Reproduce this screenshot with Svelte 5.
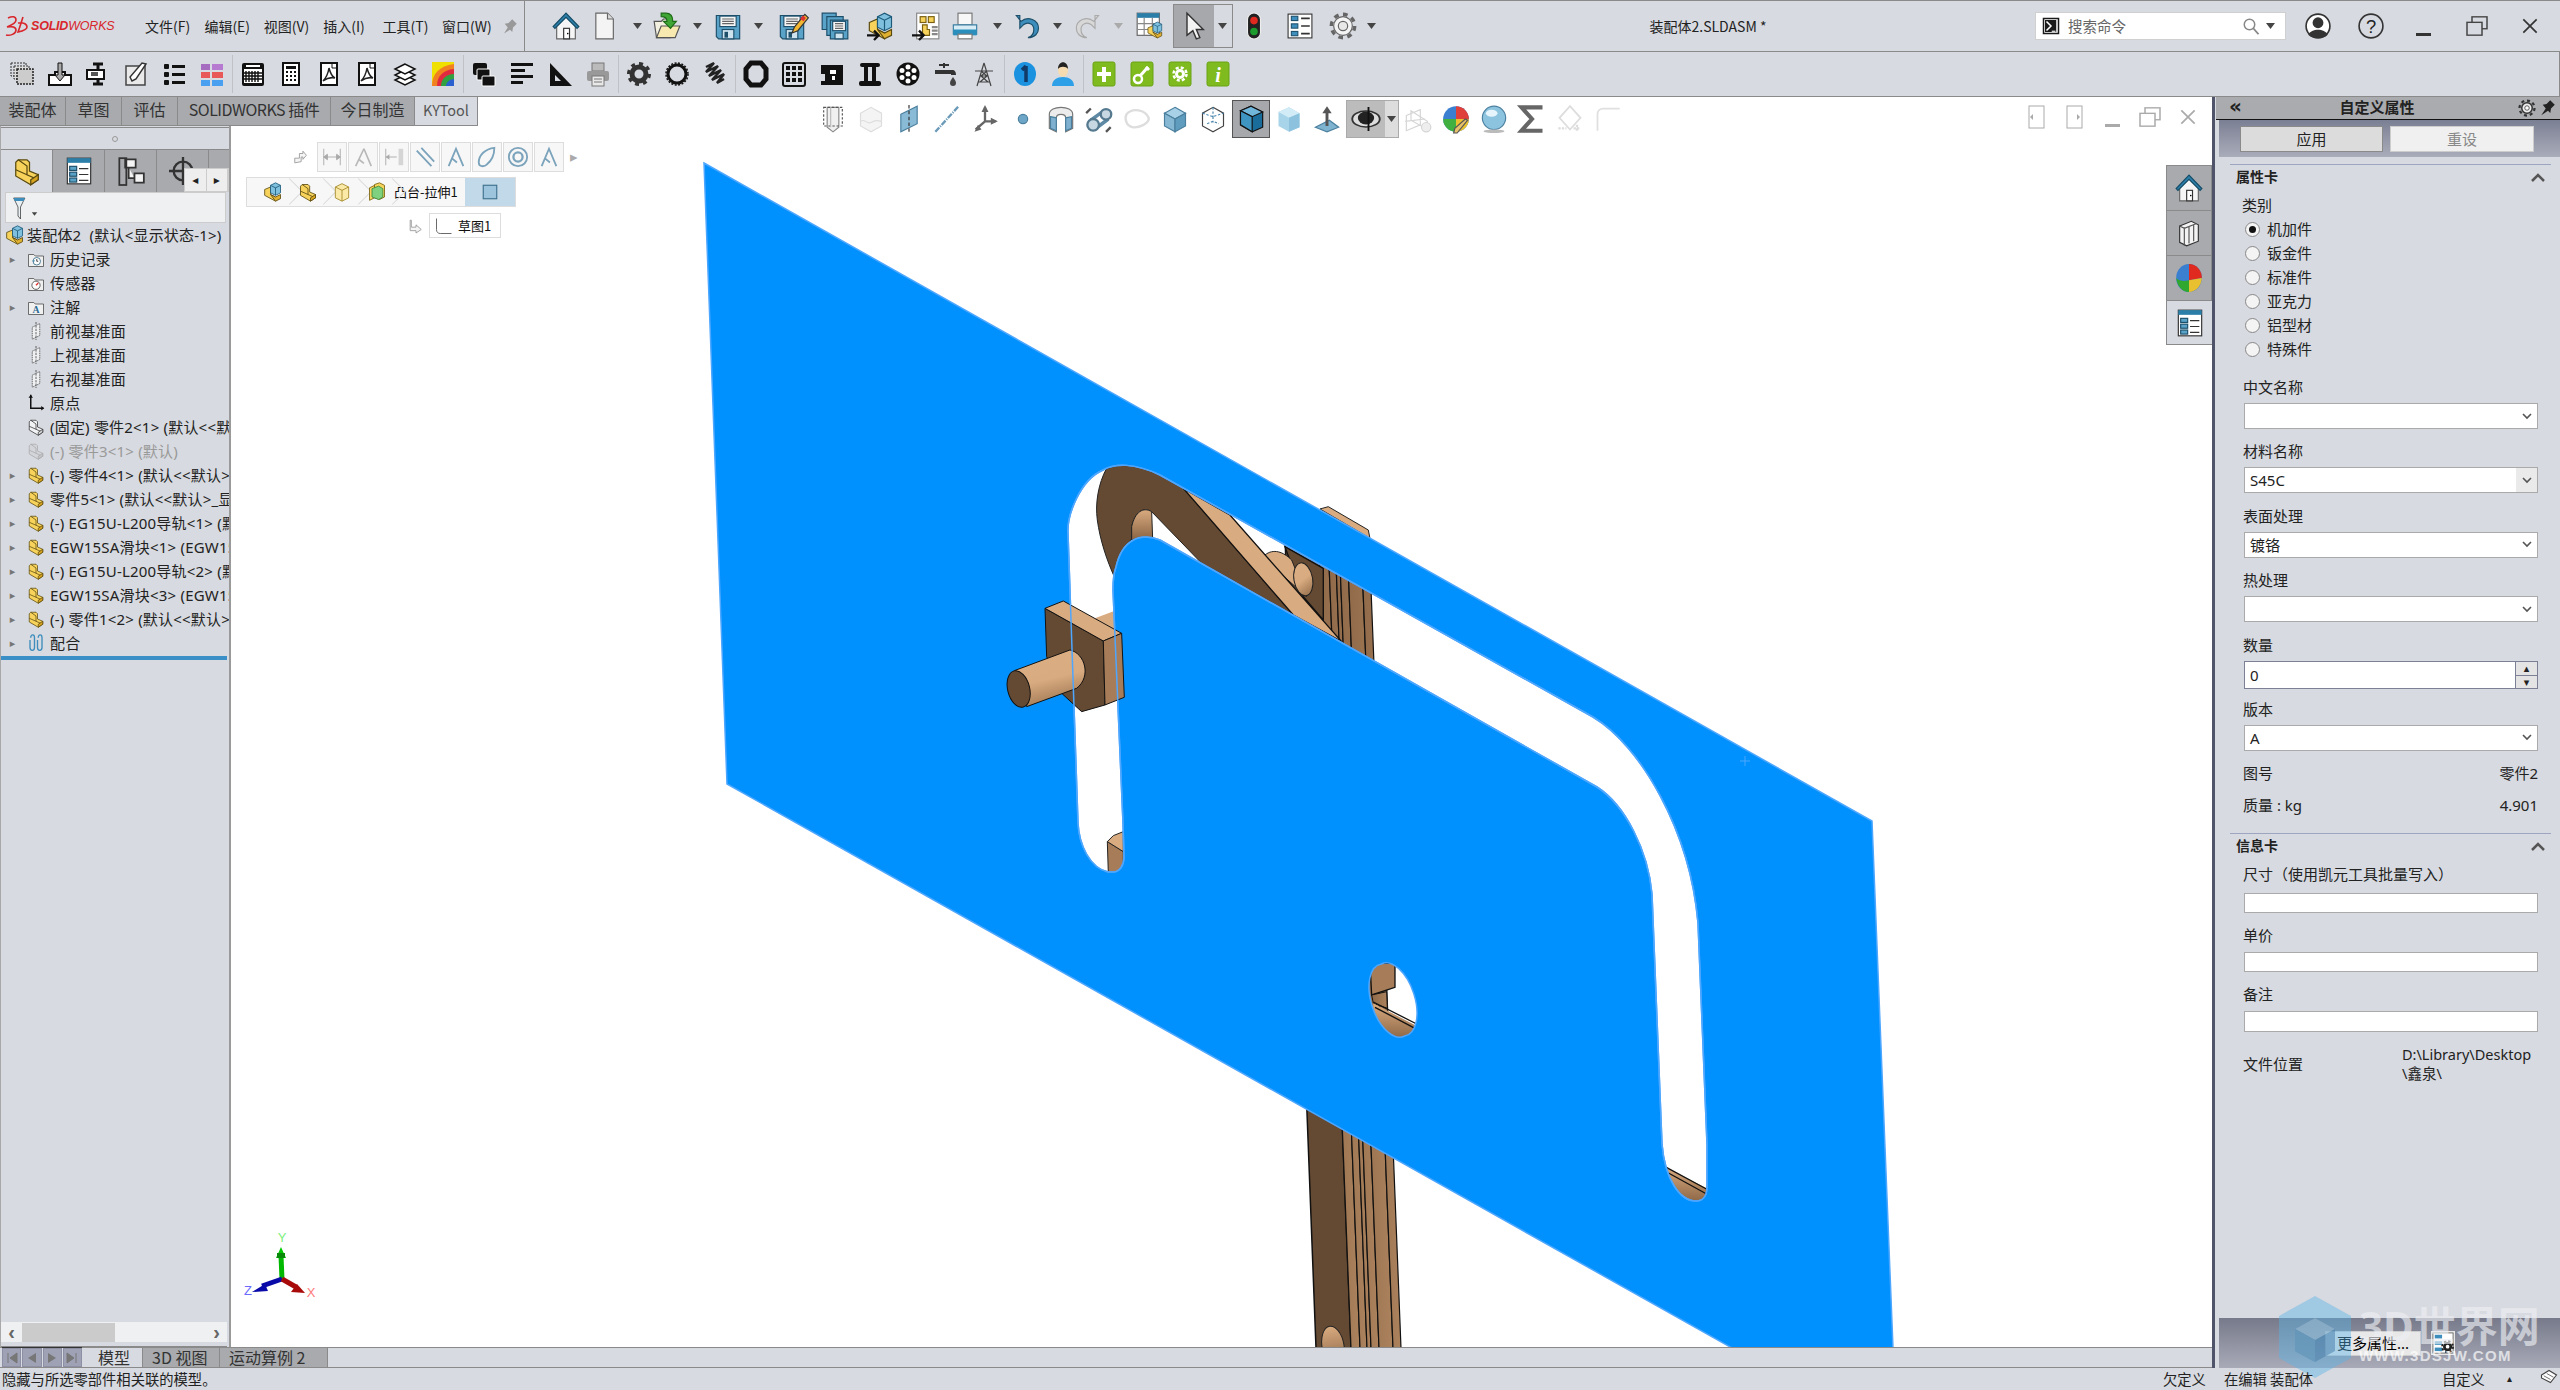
<script>
  const doc = (f = '#f4f4f4', s = '#666') => `<path d="M5 1h10l5 5v17H5z" fill="${f}" stroke="${s}"/><path d="M15 1v5h5" fill="#ddd" stroke="${s}"/>`;
  const floppy = `<path d="M2 3h20v20H4l-2-2z" fill="#5aa3c8" stroke="#1d4f6b"/><rect x="5" y="3.500" width="14" height="9" fill="#f5f5f5" stroke="#1d4f6b"/><path d="M7 6h10M7 8h10M7 10h10" stroke="#666"/><rect x="7" y="15" width="10" height="8" fill="#cfe3ee" stroke="#1d4f6b"/><rect x="9" y="17" width="3" height="5" fill="#1d4f6b"/>`;
  const cube = (a = '#a8d0e6', b = '#5f9cbd', c = '#7fb4d1', s = '#355f78') => `<path d="M12 2 21 7 12 12 3 7z" fill="${a}" stroke="${s}"/><path d="M3 7v11l9 5V12z" fill="${c}" stroke="${s}"/><path d="M21 7v11l-9 5V12z" fill="${b}" stroke="${s}"/>`;
  const lpart = (f = '#f7d35c', d = '#d9a520', s = '#5a4a10') => `<path d="M5 3h7l2 2v7l7 3v4l-6 4-12-7V5z" fill="${f}" stroke="${s}"/><path d="M5 3 12 8v7l9 4M12 15l-9-4" fill="none" stroke="${s}"/><path d="M15 23v-4l6-4v4z" fill="${d}" stroke="${s}"/>`;
  const asm = `<path d="M2 9 9 6v9l6 3v5L2 16z" fill="#f7d35c" stroke="#5a4a10"/><path d="M9 15l6 3 6-3v5l-6 3z" fill="#e0b030" stroke="#5a4a10"/><path d="M9 4l6-3 6 3v9l-6 3-6-3z" fill="#7fc0de" stroke="#1d5a7a"/><path d="M9 4l6 3 6-3M15 7v9" fill="none" stroke="#1d5a7a"/>`;
  const blackDoc = (inner) => `<path d="M4 1h16v22H4z" fill="#fff" stroke="#111" stroke-width="2"/>${inner}`;
  const pdf = blackDoc(`<path d="M15 1v5h5" fill="none" stroke="#111"/><path d="M12 6c-1 6-3 10-6 13 4-3 8-4 12-3-4-2-5-6-6-10z" fill="none" stroke="#222" stroke-width="1.500"/>`);
  const green = (x) => `<rect x="1" y="0" width="22" height="24" rx="2" fill="#7fba1f" stroke="#6aa316"/>${x}`;
  const restoreIcon = (c, f) => `<rect x="7" y="2" width="15" height="13" fill="none" stroke="${c}" stroke-width="1.500"/><rect x="2" y="8" width="15" height="14" fill="${f}" stroke="${c}" stroke-width="1.500"/>`;
  const I = {
    home: `<path d="M4 12v11h16V12L12 4z" fill="#f5f5f5" stroke="#666"/><path d="M12 1 1 12.500l1.500 1.500L12 4.500l9.500 9.500 1.500-1.500z" fill="#2b7ea8" stroke="#134b66"/><rect x="10" y="14" width="5" height="9" fill="#fff" stroke="#333"/><circle cx="13.500" cy="18.500" r=".7"/>`,
    doc: doc(),
    open: `<path d="M3 22 1 8h6l2-2h6v16z" fill="#f3f0e0" stroke="#555"/><path d="M3 22l4-10h16l-4 10z" fill="#f7e9b0" stroke="#555"/><path d="M7 1h4c4 0 6 3 6 7h3l-5 6-6-6h3c0-3-2-4-5-4z" fill="#3fa535" stroke="#1d6a16"/>`,
    save: floppy,
    saveas: floppy + `<path d="M23 2l-9 11-2 5 5-2 9-11z" fill="#f2b632" stroke="#333"/><path d="M22 8l2-3-3-2-2 3z" fill="#d33"/>`,
    saveall: `<path d="M1 1h12v14H1z" fill="#5aa3c8" stroke="#1d4f6b"/><path d="M5 4h14v16H5z" fill="#5aa3c8" stroke="#1d4f6b"/><path d="M8 7h15v16H8z" fill="#5aa3c8" stroke="#1d4f6b"/><rect x="10" y="8" width="11" height="8" fill="#f5f5f5" stroke="#1d4f6b"/><path d="M12 10h7M12 12h7M12 14h7" stroke="#666"/><rect x="12" y="18" width="7" height="5" fill="#cfe3ee" stroke="#1d4f6b"/>`,
    asmgo: asm + `<path d="M0 20h9M6 16l4 4-4 4" fill="none" stroke="#111" stroke-width="2"/>`,
    drawgo: `<rect x="4" y="1" width="19" height="22" fill="#fff" stroke="#888"/><rect x="7" y="4" width="5" height="5" fill="#f7d35c" stroke="#7a6010"/><rect x="14" y="4" width="5" height="5" fill="#f7d35c" stroke="#7a6010"/><path d="M9 11h4v4h2v5H9z" fill="#f7d35c" stroke="#7a6010"/><path d="M17 13h5M17 16h5M17 19h5" stroke="#888" stroke-width="2"/><path d="M0 20h9M6 16l4 4-4 4" fill="none" stroke="#111" stroke-width="2"/>`,
    print: `<rect x="6" y="1" width="12" height="10" fill="#f7f7f7" stroke="#777"/><path d="M2 11h20v8H2z" fill="#d8ecf5" stroke="#3a7fa3"/><rect x="2" y="15" width="20" height="5" fill="#2b8fbe"/><rect x="6" y="19" width="12" height="4" fill="#fff" stroke="#777"/>`,
    undo: `<path d="M6 3v11l3-3c4-3 9-1 9 4 0 3-2 6-5 7 6 0 9-4 9-8 0-7-9-11-15-6L3 3z" transform="translate(-1 0)" fill="#3d8ebc" stroke="#1d4f6b"/>`,
    redo: `<g transform="matrix(-1 0 0 1 24 0)"><path d="M6 3v11l3-3c4-3 9-1 9 4 0 3-2 6-5 7 6 0 9-4 9-8 0-7-9-11-15-6L3 3z" fill="#d8d8d8" stroke="#aaa"/></g>`,
    table: `<rect x="1" y="1" width="19" height="19" fill="#fff" stroke="#666"/><rect x="1" y="1" width="19" height="4" fill="#2b7ea8"/><path d="M1 10h19M1 15h19M7 5v15M14 5v15" stroke="#888"/><g transform="translate(9 8) scale(.62)">${asm}</g>`,
    cursor: `<path d="M6 1v19l5-4 3 7 3-1-3-7h6z" fill="#f3f3f3" stroke="#333" stroke-width="1.200"/>`,
    traffic: `<rect x="6" y="0" width="12" height="24" rx="6" fill="#222" stroke="#eee"/><circle cx="12" cy="7" r="3.500" fill="#e02a20"/><circle cx="12" cy="17" r="3.500" fill="#1c9c2c"/>`,
    list: `<rect x="1" y="1" width="22" height="22" fill="#fff" stroke="#333"/><path d="M13 5h8M13 12h8M13 19h8" stroke="#333" stroke-width="1.500"/><rect x="4" y="3" width="6" height="4" fill="#3d8ebc" stroke="#1d4f6b"/><rect x="4" y="10" width="6" height="4" fill="#3d8ebc" stroke="#1d4f6b"/><rect x="4" y="17" width="6" height="4" fill="#3d8ebc" stroke="#1d4f6b"/>`,
    gearw: `<circle cx="12" cy="12" r="8" fill="#f4f4f4" stroke="#666"/><circle cx="12" cy="12" r="10" fill="none" stroke="#666" stroke-width="3" stroke-dasharray="4 3.800"/><circle cx="12" cy="12" r="4" fill="#e8e8e8" stroke="#666"/>`,
    pin: `<path d="M9 14 4 22l8-5 3 3 1-6 5-5-6-6-5 5-5 1z" fill="#999"/>`,
    x: `<path d="M4 4l16 16M20 4 4 20" stroke="#333" stroke-width="2"/>`,
    xl: `<path d="M4 4l16 16M20 4 4 20" stroke="#aaa" stroke-width="2"/>`,
    rest: restoreIcon('#444', '#d7dae0'),
    restl: restoreIcon('#aaa', '#fff'),
    d1: `<rect x="1" y="1" width="15" height="13" fill="none" stroke="#333" stroke-dasharray="2 1"/><rect x="4" y="4" width="15" height="13" fill="#ddd" stroke="#333" stroke-dasharray="2 1"/><rect x="7" y="7" width="16" height="15" fill="#ccc" stroke="#222" stroke-width="1.500" stroke-dasharray="2 1"/>`,
    d2: `<path d="M1 13h6v-3h10v3h6v10H1z" fill="#fff" stroke="#111" stroke-width="2"/><path d="M10 1h4v12h3l-5 6-5-6h3z" fill="#aaa" stroke="#111"/>`,
    d3: `<path d="M7 2h10M7 22h10M12 2v20" stroke="#111" stroke-width="3"/><rect x="1" y="8" width="17" height="9" fill="#fff" stroke="#111" stroke-width="2"/><rect x="5" y="10" width="7" height="4" fill="#555"/>`,
    d4: `<path d="M2 4h19v19H2z" fill="#e9e9e9" stroke="#444" stroke-width="1.500"/><path d="M6 15l2 4 4-2L22 2l-4-1z" fill="#fff" stroke="#333" stroke-width="1.500"/>`,
    d5: `<g fill="#111"><rect x="2" y="2" width="5" height="5" rx="1"/><rect x="10" y="3" width="13" height="3"/><rect x="2" y="10" width="5" height="5" rx="1"/><rect x="10" y="11" width="13" height="3"/><rect x="2" y="18" width="5" height="5" rx="1"/><rect x="10" y="19" width="13" height="3"/></g>`,
    d6: `<rect x="1" y="2" width="9" height="6" fill="#a66cc0"/><rect x="12" y="2" width="11" height="6" fill="#b67ad0"/><rect x="1" y="10" width="9" height="6" fill="#e85858"/><rect x="12" y="10" width="11" height="6" fill="#e85858"/><rect x="1" y="18" width="9" height="6" fill="#4aa0f0"/><rect x="12" y="18" width="11" height="6" fill="#4aa0f0"/>`,
    d7: `<rect x="1" y="1" width="22" height="23" rx="2" fill="#111"/><rect x="3" y="7" width="18" height="14" fill="#fff"/><path d="M5 9v11M8 9v11M11 9v11M14 9v11M17 9v11M3 11h18M3 14h18M3 17h18" stroke="#111" stroke-width="1.400"/><rect x="5" y="3" width="14" height="2" fill="#fff"/>`,
    d8: blackDoc(`<rect x="7" y="4" width="10" height="3" fill="#111"/><path d="M7 10h2M11 10h2M15 10h2M7 14h2M11 14h2M15 14h2M7 18h2M11 18h2M15 18h2" stroke="#111" stroke-width="2"/>`),
    pdf,
    d11: `<g fill="#fff" stroke="#111" stroke-width="1.500"><path d="M12 13 2 18l10 5 10-5z"/><path d="M12 8 2 13l10 5 10-5z"/><path d="M12 2 2 7l10 5 10-5z"/></g>`,
    d12: `<rect x="1" y="0" width="22" height="24" fill="#f0e000"/><path d="M1 24C1 12 8 4 23 2v22z" fill="#f08020"/><path d="M6 24C6 14 12 8 23 7v17z" fill="#e02a40"/><path d="M10 24c0-7 5-12 13-12v12z" fill="#30a040"/><path d="M15 24c0-3 3-7 8-7v7z" fill="#2a60d0"/>`,
    d13: `<rect x="1" y="1" width="14" height="12" rx="2" fill="#111"/><rect x="5" y="7" width="13" height="11" rx="1" fill="#111" stroke="#fff"/><rect x="10" y="14" width="13" height="10" rx="1" fill="#111" stroke="#fff"/>`,
    d14: `<g fill="#111"><rect x="1" y="1" width="22" height="3"/><rect x="1" y="7" width="14" height="3"/><rect x="1" y="13" width="22" height="3"/><rect x="1" y="19" width="12" height="3"/></g>`,
    d15: `<path d="M2 1v23h22z" fill="#111"/><path d="M7 13v6h6z" fill="#d7dae0"/>`,
    d16: `<rect x="6" y="1" width="12" height="8" fill="#bbb" stroke="#777"/><rect x="1" y="9" width="22" height="10" rx="2" fill="#999"/><rect x="6" y="14" width="12" height="10" fill="#e8e8e8" stroke="#777"/><path d="M8 17h8M8 20h8" stroke="#777"/>`,
    d17: `<circle cx="12" cy="12" r="7" fill="none" stroke="#333" stroke-width="5"/><circle cx="12" cy="12" r="10.500" fill="none" stroke="#333" stroke-width="3" stroke-dasharray="4 4.200"/>`,
    d18: `<circle cx="12" cy="12" r="9" fill="none" stroke="#111" stroke-width="3"/><circle cx="12" cy="12" r="11" fill="none" stroke="#111" stroke-width="1.500" stroke-dasharray="2 1.500"/>`,
    d19: `<path d="M3 5 11 1 3 10l12-6-9 10 12-6-9 10 12-6-7 9 7-4" fill="none" stroke="#222" stroke-width="2.500"/>`,
    d20: `<path d="M7 1h10l5 6v10l-5 6H7l-5-6V7z" fill="none" stroke="#111" stroke-width="5"/>`,
    d21: `<rect x="1" y="1" width="22" height="23" rx="2" fill="none" stroke="#111" stroke-width="2"/><g fill="#111"><rect x="4" y="4" width="4" height="4"/><rect x="10" y="4" width="4" height="4"/><rect x="16" y="4" width="4" height="4"/><rect x="4" y="10" width="4" height="4"/><rect x="10" y="10" width="4" height="4"/><rect x="16" y="10" width="4" height="4"/><rect x="4" y="16" width="4" height="4"/><rect x="10" y="16" width="4" height="4"/><rect x="16" y="16" width="4" height="4"/></g>`,
    d22: `<path d="M1 3h22v20H1v-4h4v-7H1z" fill="#111"/><rect x="10" y="8" width="6" height="4" fill="#fff"/><rect x="12" y="14" width="3" height="4" fill="#fff"/>`,
    d23: `<rect x="2" y="1" width="20" height="4" rx="2" fill="#111"/><rect x="6" y="5" width="4" height="14" fill="#111"/><rect x="14" y="5" width="4" height="14" fill="#111"/><rect x="1" y="19" width="22" height="5" rx="2" fill="#111"/>`,
    d24: `<circle cx="12" cy="12" r="11.500" fill="#111"/><g fill="#fff"><circle cx="12" cy="12" r="2.500"/><circle cx="12" cy="5" r="2.500"/><circle cx="12" cy="19" r="2.500"/><circle cx="6" cy="8.500" r="2.500"/><circle cx="18" cy="8.500" r="2.500"/><circle cx="6" cy="15.500" r="2.500"/><circle cx="18" cy="15.500" r="2.500"/></g>`,
    d25: `<path d="M10 1v5M5 3h10" stroke="#333" stroke-width="2"/><path d="M1 8h17c3 0 4 2 4 5H17v-1H1z" fill="#333"/><path d="M19 15c-2 3-3 4-3 6a3 3 0 0 0 6 0c0-2-1-3-3-6z" fill="#444"/>`,
    d26: `<path d="M12 1 5 24M12 1l7 23M8 14h8M6 20h12M3 9h18M9 9l6 5-7 6M15 9l-6 5 7 6" fill="none" stroke="#444" stroke-width="1.200"/>`,
    one: `<ellipse cx="12" cy="12" rx="11" ry="12" fill="#1a92e0"/><path d="M13 4v16M9 8l4-4" stroke="#123a66" stroke-width="3.500" fill="none"/>`,
    user: `<path d="M1 24c0-6 5-9 11-9s11 3 11 9z" fill="#2da0e8"/><ellipse cx="12" cy="8" rx="5" ry="7" fill="#f6dcb0"/><path d="M7 7c0-9 10-9 10 0-2-3-8-3-10 0z" fill="#222"/>`,
    gplus: green(`<path d="M10 5h4v5h5v4h-5v6h-4v-6H5v-4h5z" fill="#fff"/>`),
    gkey: green(`<circle cx="8" cy="17" r="4" fill="none" stroke="#fff" stroke-width="2.500"/><path d="M10 14 18 5" stroke="#fff" stroke-width="3"/><path d="M16 5l3 3" stroke="#fff" stroke-width="3"/>`),
    ggear: green(`<circle cx="12" cy="12" r="3.500" fill="none" stroke="#fff" stroke-width="3"/><circle cx="12" cy="12" r="6.500" fill="none" stroke="#fff" stroke-width="2.500" stroke-dasharray="3 2.100"/>`),
    ginfo: green(`<text x="12" y="20" text-anchor="middle" font-family="Liberation Serif" font-style="italic" font-weight="700" font-size="20" fill="#fff">i</text>`),
    h1: `<path d="M7 2h10v17l-5 4-5-4z" fill="#f0f0f0" stroke="#888"/><rect x="4" y="2" width="16" height="16" fill="none" stroke="#555" stroke-dasharray="2 1.500"/><path d="M10 2v17" stroke="#bbb"/>`,
    h2: `<path d="M3 7l9-5 9 5v11l-9 5-9-5z" fill="#f4f4f4" stroke="#ddd"/><path d="M3 14c4-3 5 3 9 1s5-2 9-1" fill="none" stroke="#ddd"/>`,
    h3: `<path d="M5 8l14-7v15L5 23z" fill="#8abbd6" stroke="#4a7f9e"/><path d="M12 0v24" stroke="#333" stroke-dasharray="3 2"/>`,
    h4: `<path d="M2 23 22 1" stroke="#6a9ab8" stroke-width="2" stroke-dasharray="5 1 1 1"/>`,
    h5: `<path d="M12 14V2M12 14l9 0M12 14l-8 7" stroke="#666" stroke-width="2"/><path d="M12 0l-3 6h6zM23 14l-6-3v6zM3 23l6-2-3-4z" fill="#666"/>`,
    h6: `<circle cx="12" cy="12" r="4" fill="#6ea6c8" stroke="#4a7f9e"/>`,
    h7: `<path d="M2 8c0-8 20-8 20 0v12l-6 3V11c0-4-8-4-8 0v12l-6-3z" fill="#ececec" stroke="#777"/><path d="M3 10l5 1v11l-5-2zM16 11l5-1v10l-5 2z" fill="#7fb0cf" stroke="#4a7f9e"/>`,
    h8: `<path d="M5 13 16 5M8 21 20 12" stroke="#5f8aa6" stroke-width="3"/><circle cx="7" cy="17" r="5" fill="#c8d8e2" stroke="#55798f" stroke-width="2"/><circle cx="18" cy="8" r="4.500" fill="#c8d8e2" stroke="#55798f" stroke-width="2"/><path d="M1 7l4-4M22 19l-4 4" stroke="#555" stroke-width="2"/>`,
    h9: `<path d="M3 8c5-6 16-4 19 3 1 5-9 9-14 8S1 12 3 8z" fill="#fff" stroke="#ddd" stroke-width="2"/>`,
    h10: cube('#a8d0e6', '#5f9cbd', '#86b8d4', '#4a7f9e'),
    h11: `<path d="M12 2 21 7v11l-9 5-9-5V7z" fill="#fff" stroke="#444"/><path d="M12 2v8M3 7l9 3 9-3M12 10v5M7 16l5-2 5 2" fill="none" stroke="#4a86ad" stroke-dasharray="2 1.500"/>`,
    h12: `<path d="M12 1 22 6v13l-9 4-10-6V5z" fill="#1a6d9a" stroke="#111"/><path d="M3 5 12 1l10 5-9 4z" fill="#70b6da" stroke="#111"/><path d="M3 5l10 5v13L3 17z" fill="#3f95c2" stroke="#111"/>`,
    h13: `<path d="M12 2 21 7v12l-9 4-9-5V6z" fill="#a8d4ea"/><path d="M12 2 21 7l-9 4-9-5z" fill="#d2ecf7"/><path d="M12 11l9-4v12l-9 4z" fill="#8cc2de"/>`,
    h14: `<path d="M2 19 14 13l8 6-10 4z" fill="#7fb4d1" stroke="#4a7f9e"/><path d="M12 18V5" stroke="#555" stroke-width="2.500"/><path d="M12 1 8 7h8z" fill="#555"/>`,
    eye: `<ellipse cx="12" cy="12" rx="11" ry="8" fill="#ddd" stroke="#333" stroke-width="1.500"/><circle cx="12" cy="11" r="6.500" fill="#222"/><path d="M14 0v24" stroke="#111" stroke-width="1.500"/>`,
    h16: `<g fill="none" stroke="#d5d5d5"><path d="M2 9l12-5v13L2 22zM6 5l14 9v7L6 13zM1 14l17-2"/><circle cx="19" cy="19" r="4" fill="#eee"/></g>`,
    ball: `<circle cx="12" cy="12" r="11" fill="#3a7fd0"/><path d="M12 1a11 11 0 0 1 11 11H12z" fill="#e0403a"/><path d="M1 12a11 11 0 0 0 11 11V12z" fill="#40b040"/><path d="M23 12a11 11 0 0 1-11 11V12z" fill="#e8c030"/><path d="M22 13 13 24l-3 0 1-4 9-8z" fill="#e8c26a" stroke="#555"/>`,
    sphere: `<circle cx="12" cy="11" r="10" fill="#8cc4e0" stroke="#4a7f9e"/><ellipse cx="10" cy="7" rx="5" ry="3" fill="#e6f4fb"/><ellipse cx="12" cy="22.500" rx="9" ry="1.500" fill="#bbb"/>`,
    sigma: `<path d="M21 2H3l9 10-9 10h18" fill="none" stroke="#666" stroke-width="3.500"/>`,
    h20: `<path d="M12 1l9 10-9 10-9-10z" fill="#fff" stroke="#ddd" stroke-width="1.500"/><path d="M2 20h7M18 17v6M15 20h6" stroke="#ddd" stroke-width="2" stroke-dasharray="2 1"/>`,
    h21: `<path d="M3 22V8c0-3 2-5 5-5h14" fill="none" stroke="#e0e0e0" stroke-width="1.500"/>`,
    vpL: `<rect x="5" y="1" width="15" height="22" fill="#fff" stroke="#aaa"/><path d="M9 9l-3 3 3 3z" fill="#aaa"/>`,
    vpR: `<rect x="5" y="1" width="15" height="22" fill="#fff" stroke="#aaa"/><path d="M15 9l3 3-3 3z" fill="#aaa"/>`,
    books: `<path d="M4 6l10-4 6 3v14l-10 4-6-3z" fill="#f3f3f3" stroke="#333"/><path d="M8 7v16M12 6v15M16 5v14M4 6l4 2 10-4" fill="none" stroke="#555"/>`,
    egg: `<ellipse cx="12" cy="12" rx="11" ry="12" fill="#3a7fd0"/><path d="M12 0a11 12 0 0 1 11 12l-11 2z" fill="#e02a20"/><path d="M1 12c3 3 7 3 11 2v10C6 24 2 19 1 12z" fill="#30a830"/><path d="M23 12c0 6-5 12-11 12V14z" fill="#e8c030"/>`,
    fbh: `<path d="M2 6h7l2 2h11v14H2z" fill="#f0f0f0" stroke="#444"/><circle cx="13" cy="15" r="5" fill="#fff" stroke="#1d5a7a"/><path d="M13 12v3h2" fill="none" stroke="#111"/><path d="M7 14l2 2 2-2z" fill="#2b7ea8"/>`,
    fbs: `<path d="M2 6h7l2 2h11v14H2z" fill="#f0f0f0" stroke="#444"/><circle cx="12" cy="15" r="5.500" fill="#fff" stroke="#333"/><path d="M12 15l3-3" stroke="#d33" stroke-width="2"/>`,
    fba: `<path d="M2 6h7l2 2h11v14H2z" fill="#f0f0f0" stroke="#444"/><text x="12" y="20" text-anchor="middle" font-family="Liberation Serif" font-weight="700" font-size="13" fill="#2b6a95">A</text>`,
    plane: `<path d="M7 7l10-5v16l-10 5z" fill="#eef0f2" stroke="#444" stroke-dasharray="2 1"/><path d="M12 0v24" stroke="#333" stroke-dasharray="3 1.500"/>`,
    origin: `<path d="M5 1v18h17" fill="none" stroke="#111" stroke-width="2"/><path d="M2 5l3-4 3 4zM19 16l4 3-4 3z" fill="#111"/>`,
    partw: lpart('#f2f3f5', '#d4d6da', '#333'),
    partg: lpart('#d3d5da', '#c2c4c8', '#aaa'),
    party: lpart(),
    mates: `<path d="M5 5c0-5 5-5 5 0v13c0 5-6 5-6 0V8M15 5c0-5 5-5 5 0v13c0 5-6 5-6 0V8" fill="none" stroke="#3d8ebc" stroke-width="1.800"/>`,
    asm,
    psheet: `<rect x="2" y="1" width="20" height="22" fill="#fff" stroke="#333"/><rect x="2" y="1" width="20" height="4" fill="#2b7ea8"/><rect x="4" y="8" width="6" height="3.500" fill="#5aa3c8" stroke="#1d4f6b"/><rect x="4" y="13" width="6" height="3.500" fill="#5aa3c8" stroke="#1d4f6b"/><rect x="4" y="18" width="6" height="3.500" fill="#5aa3c8" stroke="#1d4f6b"/><path d="M12 10h8M12 15h8M12 20h8" stroke="#333"/>`,
    tree: `<path d="M7 2h9v7H7zM15 14h8v8h-8zM15 3v0M10 9v9h5" fill="#f4f4f4" stroke="#333" stroke-width="1.500"/><rect x="2" y="1" width="6" height="23" fill="none" stroke="#333" stroke-width="1.500"/>`,
    target: `<circle cx="12" cy="12" r="8" fill="none" stroke="#333" stroke-width="2"/><path d="M12 0v24M0 12h24" stroke="#333" stroke-width="2"/>`,
    funnel: `<path d="M1 2h18l-7 9v12l-4-3v-9z" fill="#e8f0f4" stroke="#444"/><path d="M1 2h18l-2 3H3z" fill="#3d8ebc"/>`,
    extrude: `<path d="M3 7l6-3v15l-6 3z" fill="#f7d35c" stroke="#7a6010"/><path d="M9 3l6-2 6 3v14l-6 3-6-2z" fill="#f7d35c" stroke="#7a6010"/><path d="M6 8l8-3 5 3v10l-5 3-8-3z" fill="#7fd07f" stroke="#3a8a3a"/>`,
    box: `<path d="M4 6l8-4 8 4v13l-8 4-8-4z" fill="#fbe9a8" stroke="#a08420"/><path d="M4 6l8 4 8-4M12 10v13" fill="none" stroke="#a08420"/>`,
    sq: `<rect x="3" y="3" width="18" height="18" fill="#9cc4dc" stroke="#3d6f8c" stroke-width="1.500"/>`,
    dim: `<path d="M3 3v18M21 3v18M3 12h18M3 12l4-3v6zM21 12l-4-3v6z" stroke="#aaa" fill="#aaa"/>`,
    ang: `<path d="M4 22 13 3M13 3l8 19M8 15l5 4" stroke="#b8b8b8" stroke-width="1.800" fill="none"/>`,
    dim2: `<path d="M3 3v18M3 12h12" stroke="#aaa"/><path d="M3 12l4-3v6z" fill="#aaa"/><rect x="17" y="3" width="5" height="18" fill="#d5d5d5"/>`,
    par: `<path d="M3 5l16 17M8 2l14 15" stroke="#7ba3bb" stroke-width="2"/>`,
    ang2: `<path d="M4 22 12 3l8 19M7 13l6 5" stroke="#7ba3bb" stroke-width="2" fill="none"/>`,
    drop: `<path d="M20 2C10 3 3 10 3 18c0 5 6 5 9 2 5-4 8-11 8-18z" fill="none" stroke="#7ba3bb" stroke-width="2"/>`,
    ring: `<circle cx="12" cy="12" r="10" fill="none" stroke="#7ba3bb" stroke-width="2"/><circle cx="12" cy="12" r="5" fill="none" stroke="#7ba3bb" stroke-width="2.500"/>`,
    trail: `<path d="M3 22v-8h8V6h6V2l6 7-6 7v-4h-3v8z" fill="#f5f5f5" stroke="#999" stroke-width="1.500"/>`,
    trail2: `<path d="M4 2v12h8v-4l9 8-9 6v-4H2V2z" fill="#f5f5f5" stroke="#999" stroke-width="1.500"/>`,
    sketch: `<path d="M2 2v15c0 3 2 5 5 5h15" fill="none" stroke="#666" stroke-width="1.300"/>`,
    mag: `<circle cx="10" cy="10" r="7" fill="none" stroke="#888" stroke-width="2"/><path d="M15 15l7 8" stroke="#888" stroke-width="2.500"/>`,
    swcmd: `<rect x="1" y="1" width="22" height="22" fill="#1a1a1a"/><rect x="3" y="3" width="18" height="18" fill="#fff"/><path d="M4 4h15v16H4z" fill="#1a1a1a"/><path d="M6 6l6 6-6 6" fill="none" stroke="#fff" stroke-width="2"/><path d="M13 19h5" stroke="#fff" stroke-width="1.500"/>`,
    avatar: `<circle cx="12" cy="12" r="11" fill="#fff" stroke="#333" stroke-width="1.500"/><circle cx="12" cy="9" r="5" fill="#333"/><path d="M3 20c3-6 15-6 18 0-4 4-14 4-18 0z" fill="#333"/>`,
    help: `<circle cx="12" cy="12" r="11" fill="none" stroke="#333" stroke-width="1.500"/><text x="12" y="18" text-anchor="middle" font-family="Liberation Sans" font-size="17" fill="#222">?</text>`,
    gearp: `<circle cx="12" cy="12" r="7" fill="#eee" stroke="#333" stroke-width="2"/><circle cx="12" cy="12" r="10" fill="none" stroke="#333" stroke-width="3" stroke-dasharray="4 3.800"/><circle cx="12" cy="12" r="3" fill="#fff" stroke="#333"/>`,
    pin2: `<path d="M9 14 3 23l9-6 3 3 1-6 5-5-6-6-5 5-5 1z" fill="#222"/>`,
    moreprop: `<rect x="1" y="1" width="22" height="22" fill="#fff" stroke="#666"/><rect x="3" y="3" width="8" height="4" fill="#3d8ebc"/><rect x="3" y="10" width="8" height="4" fill="#3d8ebc"/><rect x="3" y="17" width="8" height="4" fill="#3d8ebc"/><circle cx="17" cy="16" r="3.500" fill="none" stroke="#222" stroke-width="3"/><circle cx="17" cy="16" r="6" fill="none" stroke="#222" stroke-width="2" stroke-dasharray="2.500 2.200"/>`,
    statusmod: `<path d="M2 8l10-6 10 6-8 10L2 12z" fill="#fff" stroke="#444" stroke-width="1.500"/><path d="M5 9l9 5M9 6l9 5" stroke="#444"/>`
  };

  const row1Centers = [
    ['home', 565], ['doc', 607], ['#', 637], ['open', 667], ['#', 697], ['save', 728], ['#', 758], ['saveas', 788],
    ['saveall', 835], ['asmgo', 880], ['drawgo', 928], ['print', 968], ['#', 997], ['undo', 1028], ['#', 1057],
    ['redo', 1089], ['#g', 1117], ['table', 1150]
  ];
  const cellWidths = (list, start) => list.map((c, i) => {
    const left = i === 0 ? start : (list[i - 1][1] + c[1]) / 2;
    const right = i === list.length - 1 ? c[1] * 2 - left : (c[1] + list[i + 1][1]) / 2;
    return { name: c[0], w: right - left };
  });
  const row1 = cellWidths(row1Centers, 545);
  const row2 = [
    ['d1', 'd2', 'd3', 'd4', 'd5', 'd6'],
    ['d7', 'd8', 'pdf', 'pdf', 'd11', 'd12'],
    ['d13', 'd14', 'd15', 'd16'],
    ['d17', 'd18', 'd19'],
    ['d20', 'd21', 'd22', 'd23', 'd24', 'd25', 'd26'],
    ['one', 'user'],
    ['gplus', 'gkey', 'ggear', 'ginfo']
  ];
  const menu = ['文件(F)', '编辑(E)', '视图(V)', '插入(I)', '工具(T)', '窗口(W)'];
  const tabs = ['装配体', '草图', '评估', 'SOLIDWORKS 插件', '今日制造'];
  const headup = ['h1', 'h2', 'h3', 'h4', 'h5', 'h6', 'h7', 'h8', 'h9', 'h10', 'h11'];
  const headup2 = ['h16', 'ball', 'sphere', 'sigma', 'h20', 'h21'];
  const sketchTools = ['dim', 'ang', 'dim2', 'par', 'ang2', 'drop', 'ring', 'ang2'];
  const tree = [
    { t: '历史记录', ic: 'fbh', a: 1 }, { t: '传感器', ic: 'fbs' }, { t: '注解', ic: 'fba', a: 1 },
    { t: '前视基准面', ic: 'plane' }, { t: '上视基准面', ic: 'plane' }, { t: '右视基准面', ic: 'plane' },
    { t: '原点', ic: 'origin' },
    { t: '(固定) 零件2<1> (默认<<默认>_显示状态 1>)', ic: 'partw' },
    { t: '(-) 零件3<1> (默认)', ic: 'partg', g: 1 },
    { t: '(-) 零件4<1> (默认<<默认>_显示状态 1>)', ic: 'party', a: 1 },
    { t: '零件5<1> (默认<<默认>_显示状态 1>)', ic: 'party', a: 1 },
    { t: '(-) EG15U-L200导轨<1> (默认)', ic: 'party', a: 1 },
    { t: 'EGW15SA滑块<1> (EGW15SA)', ic: 'party', a: 1 },
    { t: '(-) EG15U-L200导轨<2> (默认)', ic: 'party', a: 1 },
    { t: 'EGW15SA滑块<3> (EGW15SA)', ic: 'party', a: 1 },
    { t: '(-) 零件1<2> (默认<<默认>_显示状态 1>)', ic: 'party', a: 1 },
    { t: '配合', ic: 'mates', a: 1 }
  ];
  const radios = ['机加件', '钣金件', '标准件', '亚克力', '铝型材', '特殊件'];
  const fields = [
    { l: '中文名称', v: '' }, { l: '材料名称', v: 'S45C', shade: 1 }, { l: '表面处理', v: '镀铬' }, { l: '热处理', v: '' },
    { l: '数量', v: '0', spin: 1 }, { l: '版本', v: 'A' }
  ];
  const slot = 'M1108 872C1090 868 1079 845 1078 823L1068 533C1067 515 1080 480 1103 470C1115 463 1135 463 1160 475L1593 717C1640 745 1690 830 1698 923L1707 1144L1707 1187C1707 1197 1702 1201 1696 1201C1680 1201 1665 1180 1662 1144L1652 894C1648 850 1625 805 1597 787L1160 540C1140 532 1122 540 1116 567C1113 575 1113 583 1113 590L1123 823L1124 857C1124 865 1120 872 1113 872Z';
  const hole = 'M1381.300 964A20 38 -18 1 0 1404.700 1036A20 38 -18 1 0 1381.300 964Z';
  const plate = 'M704 163L1872 821L1893 1348L1732 1348L727 784Z';
  const strips = [[1351, 1360], [1360, 1367], [1367, 1371], [1371, 1379], [1379, 1393], [1393, 1401]];
</script>

{#snippet ic(name, size = 24, h = size)}
  <svg class="ic" viewBox="0 0 24 24" width={size} height={h} preserveAspectRatio="none">{@html I[name]}</svg>
{/snippet}
{#snippet caret(gray = false)}
  <svg class="ic" width="9" height="6" viewBox="0 0 9 6"><path d="M0 0h9L4.500 6z" fill={gray ? '#aaa' : '#444'} /></svg>
{/snippet}
{#snippet chev()}
  <svg class="ic" width="10" height="7" viewBox="0 0 10 7"><path d="M1 1l4 4 4-4" fill="none" stroke="#555" stroke-width="1.600" /></svg>
{/snippet}
{#snippet collapse()}
  <svg class="ic" width="14" height="9" viewBox="0 0 14 9"><path d="M1 8l6-6 6 6" fill="none" stroke="#555" stroke-width="2.500" /></svg>
{/snippet}

<div class="app">
  <header class="row1">
    <div class="brand">
      <div class="logo">
        <svg class="ic" width="24" height="22" viewBox="0 0 24 22"><path d="M3 3c4-2 8-2 8 2 0 3-4 5-9 7 5-1 9 0 9 3 0 4-6 6-10 5M13 8c5-1 9 1 9 4s-4 4-9 5c2-5 3-9 5-15" fill="none" stroke="#d8262c" stroke-width="1.600" /></svg>
        <span class="sw"><b>SOLID</b>WORKS</span>
      </div>
      <nav class="menu">{#each menu as m}<span>{m}</span>{/each}</nav>
      <span class="pin">{@render ic('pin', 18)}</span>
    </div>
    <div class="qa">
      {#each row1 as c}
        <span class="cell" style:width="{c.w}px">
          {#if c.name === '#'}{@render caret()}{:else if c.name === '#g'}{@render caret(true)}{:else}{@render ic(c.name, 28)}{/if}
        </span>
      {/each}
      <span class="cursorbox"><span class="cursorface">{@render ic('cursor', 28)}</span><span class="cursorcaret">{@render caret()}</span></span>
      <span class="cell traffic">{@render ic('traffic', 26)}</span>
      <span class="cell list">{@render ic('list', 26)}</span>
      <span class="cell gear">{@render ic('gearw', 28)}</span>
      <span class="cell gcaret">{@render caret()}</span>
    </div>
    <div class="title">装配体2.SLDASM *</div>
    <div class="search">
      {@render ic('swcmd', 18)}
      <span class="stext">搜索命令</span>
      {@render ic('mag', 18)}
      <span class="scaret">{@render caret()}</span>
    </div>
    <div class="winctl">
      <span class="wb">{@render ic('avatar', 26)}</span>
      <span class="wb">{@render ic('help', 26)}</span>
      <span class="wb"><i class="minbar"></i></span>
      <span class="wb">{@render ic('rest', 24, 22)}</span>
      <span class="wb">{@render ic('x', 20)}</span>
    </div>
  </header>

  <div class="row2">
    {#each row2 as g, gi}
      {#if gi > 0}<i class="sep"></i>{/if}
      {#each g as n}<span class="tool">{@render ic(n, 24)}</span>{/each}
    {/each}
  </div>

  <div class="stage">
    <div class="center">
      <div class="work">
        <aside class="left">
          <div class="ltop"><i class="dot"></i></div>
          <div class="ltabs">
            <span class="ltab on">{@render ic('party', 30)}</span>
            <span class="ltab">{@render ic('psheet', 28)}</span>
            <span class="ltab">{@render ic('tree', 28)}</span>
            <span class="ltab">{@render ic('target', 28)}</span>
            <span class="ltab short"></span>
            <span class="lnav"><b>◂</b><b>▸</b></span>
          </div>
          <div class="filter">{@render ic('funnel', 15, 24)}<span class="fcaret">{@render caret()}</span></div>
          <ul class="tree">
            <li class="root">{@render ic('asm', 20)}<span>装配体2&nbsp; (默认&lt;显示状态-1&gt;)</span></li>
            {#each tree as r}
              <li class:gray={r.g}>
                <i class="tw">{#if r.a}▸{/if}</i>
                <span class="tic">{@render ic(r.ic, 18)}</span>
                <span>{r.t}</span>
              </li>
            {/each}
          </ul>
          <div class="rollback"></div>
          <div class="lfill"></div>
          <div class="hscroll"><em>‹</em><i></i><em>›</em></div>
          <div class="lend"></div>
        </aside>

        <main class="view">
          <svg class="model" viewBox="231 97 1981 1251" width="1981" height="1251">
            <defs>
              <linearGradient id="cyl" x1="0" y1="0" x2="0.300" y2="1"><stop offset="0" stop-color="#dcae83" /><stop offset=".6" stop-color="#d9ab80" /><stop offset="1" stop-color="#a67e59" /></linearGradient>
              <linearGradient id="st" x1="0" y1="0" x2="1" y2="0"><stop offset="0" stop-color="#8f6949" /><stop offset="1" stop-color="#ab825c" /></linearGradient>
              <linearGradient id="bor" x1="0" y1="0" x2="0" y2="1"><stop offset="0" stop-color="#d9ab80" /><stop offset="1" stop-color="#8a6444" /></linearGradient>
            </defs>
            <path d="M1285 538L1316 1348L1351 1348L1319 538Z" fill="#654a33" stroke="#111" stroke-width="1.500" />
            {#each strips as s}
              <path d="M{s[0] - 32} 538L{s[0]} 1348L{s[1]} 1348L{s[1] - 32} 538Z" fill="url(#st)" stroke="#111" stroke-width="1.200" />
            {/each}
            <ellipse cx="1333" cy="1346" rx="11" ry="20" transform="rotate(-10 1333 1346)" fill="url(#bor)" stroke="#222" />
            <g transform="translate(960 440) scale(.3333)">
              <path d="M975 320L1090 385L1090 540L1030 470Z" fill="#654a33" stroke="#111" stroke-width="4" />
              <path d="M915 345C940 325 970 335 995 360L1040 470L905 350Z" fill="#d9ab80" stroke="#222" stroke-width="3" />
              <ellipse cx="1030" cy="418" rx="28" ry="50" transform="rotate(-10 1030 418)" fill="url(#cyl)" stroke="#222" stroke-width="3" />
              <path d="M440 85C415 130 405 190 412 240C420 300 440 360 465 415L500 320L515 295L515 260C525 215 550 200 575 215L725 370L1000 525L670 145C620 110 560 70 500 70Z" fill="#654a33" stroke="#222" stroke-width="3" />
              <path d="M575 215C550 200 525 215 515 260L515 300L578 295Z" fill="url(#bor)" stroke="#222" stroke-width="3" />
              <path d="M670 145L810 225L1145 605L1000 525Z" fill="#d9ab80" stroke="#111" stroke-width="4" />
              <path d="M1080 207L1105 200L1225 270L1230 295Z" fill="#d9ab80" stroke="#222" stroke-width="3" />
              <path d="M405 535L465 512L465 570Z" fill="#d9ab80" />
              <path d="M442 1205L490 1235L490 1300L445 1300Z" fill="#a67d58" stroke="#222" stroke-width="3" />
              <path d="M442 1205L460 1187L490 1175L490 1235Z" fill="#d9ab80" stroke="#222" stroke-width="3" />
            </g>
            <g transform="translate(1250 900) scale(.3333)">
              <path d="M360 190L435 190L435 262L365 285Z" fill="#a67d58" stroke="#111" stroke-width="4" />
              <path d="M365 285L410 275L412 325L370 310Z" fill="url(#st)" stroke="#111" stroke-width="3" />
              <path d="M370 310L500 378L500 420L370 420Z" fill="url(#bor)" />
              <path d="M370 306L500 372M375 322L495 385" stroke="#111" stroke-width="4" />
              <path d="M1245 800L1380 870L1380 910L1245 910Z" fill="url(#bor)" />
              <path d="M1245 800L1375 870M1250 816L1370 882" stroke="#111" stroke-width="4" />
            </g>
            <path d="{plate}{slot}{hole}" fill="#0091ff" fill-rule="evenodd" stroke="#4da6ff" stroke-width="1.500" />
            <g transform="translate(960 440) scale(.3333)" stroke="#111" stroke-width="3" stroke-linejoin="round">
              <path d="M255 505L430 603L435 795L365 815L305 760L260 650Z" fill="#654a33" />
              <path d="M255 505L310 483L485 580L430 603Z" fill="#d9ab80" />
              <path d="M430 603L485 580L493 772L435 795Z" fill="#a67d58" />
              <path d="M163 692L330 630C375 640 395 710 350 745L200 800Z" fill="url(#cyl)" />
              <ellipse cx="176" cy="747" rx="33" ry="56" transform="rotate(-14 176 747)" fill="#654a33" />
            </g>
            <path d={slot} fill="none" stroke="#4da6ff" stroke-width="1.500" />
            <path d="M1740 761h10M1745 756v10" stroke="#4da6ff" />
            <path d="M282 1279L281 1256" stroke="#00b800" stroke-width="5" />
            <path d="M281 1247L276 1258L286 1258Z" fill="#00c800" />
            <rect x="277" y="1253" width="8" height="5" fill="#0a8a0a" />
            <path d="M282 1279L262 1286" stroke="#0a0aa8" stroke-width="5" />
            <path d="M252 1292L265 1284L268 1291Z" fill="#0a0aa8" />
            <path d="M282 1279L296 1287" stroke="#a80a0a" stroke-width="5" />
            <path d="M305 1293L291 1292L297 1284Z" fill="#a80a0a" />
            <text x="282" y="1242" class="tr" fill="#7cf07c">Y</text>
            <text x="248" y="1295" class="tr" fill="#6a6aff">Z</text>
            <text x="311" y="1297" class="tr" fill="#ff7a7a">X</text>
          </svg>

          <div class="headup">
            {#each headup as n}<span class="hu">{@render ic(n, 28)}</span>{/each}
            <span class="hu on">{@render ic('h12', 28)}</span>
            <span class="hu">{@render ic('h13', 28)}</span>
            <span class="hu">{@render ic('h14', 28)}</span>
            <span class="hu eye"><span class="eyeface">{@render ic('eye', 30, 24)}</span><span class="eyecaret">{@render caret()}</span></span>
            {#each headup2 as n}<span class="hu">{@render ic(n, 28)}</span>{/each}
          </div>

          <div class="vpctl">
            <span>{@render ic('vpL', 24)}</span>
            <span>{@render ic('vpR', 24)}</span>
            <span><i class="minbar lite"></i></span>
            <span>{@render ic('restl', 24, 22)}</span>
            <span>{@render ic('xl', 20)}</span>
          </div>

          <div class="cmdbar">
            <span class="trail">{@render ic('trail', 14)}</span>
            <span class="cmds">{#each sketchTools as n}<span class="cmd">{@render ic(n, 22)}</span>{/each}</span>
            <span class="more">▸</span>
          </div>
          <div class="crumbs">
            <span class="cr">{@render ic('asm', 20)}</span>
            <span class="cr">{@render ic('party', 20)}</span>
            <span class="cr">{@render ic('box', 20)}</span>
            <span class="cr">{@render ic('extrude', 20)}</span>
            <span class="crt">凸台-拉伸1</span>
            <span class="crend">{@render ic('sq', 18)}</span>
          </div>
          <div class="sk">
            <span class="trail2">{@render ic('trail2', 14)}</span>
            <span class="skbox">{@render ic('sketch', 18)}<span>草图1</span></span>
          </div>

          <div class="tasktabs">
            <span>{@render ic('home', 28)}</span>
            <span>{@render ic('books', 28)}</span>
            <span>{@render ic('egg', 28)}</span>
            <span class="on">{@render ic('psheet', 28)}</span>
          </div>
        </main>

        <div class="ctabs">
          {#each tabs as t}<span>{t}</span>{/each}
          <span class="on">KYTool</span>
        </div>
      </div>
      <div class="btabs">
        <div class="bnav">
          <i><svg width="12" height="12" viewBox="0 0 12 12"><path d="M2 1v10M11 1v10L4 6z" stroke="#777" fill="#777" /></svg></i>
          <i><svg width="12" height="12" viewBox="0 0 12 12"><path d="M10 1v10L2 6z" fill="#777" /></svg></i>
          <i><svg width="12" height="12" viewBox="0 0 12 12"><path d="M2 1v10l8-5z" fill="#777" /></svg></i>
          <i><svg width="12" height="12" viewBox="0 0 12 12"><path d="M10 1v10M1 1v10l7-5z" stroke="#777" fill="#777" /></svg></i>
        </div>
        <span class="bt on">模型</span>
        <span class="bt three">3D 视图</span>
        <span class="bt motion">运动算例 2</span>
      </div>
    </div>

    <aside class="right">
      <div class="rhead">
        <span class="rback">«</span>
        <b>自定义属性</b>
        <span class="rgear">{@render ic('gearp', 18)}</span>
        <span class="rpin">{@render ic('pin2', 18)}</span>
      </div>
      <div class="rbody">
        <div class="actions">
          <button class="apply">应用</button>
          <button class="reset">重设</button>
        </div>
        <section class="sec">
          <div class="sech"><b>属性卡</b>{@render collapse()}</div>
          <div class="lab cat">类别</div>
          {#each radios as r, i}
            <div class="radio"><i class:sel={i === 0}></i><span>{r}</span></div>
          {/each}
          <div class="fields">
            {#each fields as f}
              <div class="field">
                <div class="lab">{f.l}</div>
                <div class="inp" class:spinbox={f.spin}>
                  <span>{f.v}</span>
                  {#if f.spin}
                    <span class="spin"><i>▴</i><i>▾</i></span>
                  {:else}
                    <span class="dd" class:shade={f.shade}>{@render chev()}</span>
                  {/if}
                </div>
              </div>
            {/each}
          </div>
          <div class="kv first"><span>图号</span><span>零件2</span></div>
          <div class="kv"><span>质量 : kg</span><span>4.901</span></div>
        </section>
        <section class="sec info">
          <div class="sech"><b>信息卡</b>{@render collapse()}</div>
          <div class="lab l1">尺寸（使用凯元工具批量写入）</div>
          <div class="inp small"></div>
          <div class="lab l2">单价</div>
          <div class="inp small"></div>
          <div class="lab l2">备注</div>
          <div class="inp small b"></div>
          <div class="loc"><span>文件位置</span><span class="path">D:\Library\Desktop<br />\鑫泉\</span></div>
        </section>
        <div class="rfill"></div>
        <div class="rfoot">
          <button class="morebtn">更多属性...</button>
          <span class="mp">{@render ic('moreprop', 22)}</span>
        </div>
      </div>
      <div class="wm" aria-hidden="true">
        <svg width="72" height="82" viewBox="0 0 72 82"><path d="M36 0 72 20v42L36 82 0 62V20z" fill="#5bb5e8" opacity=".55" /><path d="M36 22 56 33v22L36 66 16 55V33z" fill="#4c87b4" opacity=".8" /><path d="M36 22 56 33 36 44 16 33z" fill="#8ab6d2" /><path d="M36 44v22L16 55V33z" fill="#5f9bc2" /></svg>
        <div class="wmt"><b>3D世界网</b><small>WWW.3DSJW.COM</small></div>
      </div>
    </aside>
  </div>

  <footer class="status">
    <span class="smsg">隐藏与所选零部件相关联的模型。</span>
    <span class="s1">欠定义</span>
    <span class="s2">在编辑 装配体</span>
    <span class="s3">自定义</span>
    <span class="s4">▴</span>
    <span class="s5">{@render ic('statusmod', 18)}</span>
  </footer>
</div>

<style>
  :global(body) { margin: 0; overflow: hidden; background: #d7dae0; }
  .app {
    width: 2560px; height: 1390px; display: flex; flex-direction: column; background: #d7dae0; color: #222;
    font: 14.500px/1.2 "Noto Sans CJK SC", "Noto Sans", sans-serif; overflow: hidden;
  }
  .ic { display: block; flex: none; overflow: visible; }
  i { font-style: normal; }

  .row1 { height: 50px; border-top: 1px solid #8a8a8a; border-bottom: 1px solid #8a8a8a; display: flex; align-items: center; flex: none; position: relative; }
  .brand { width: 524px; height: 100%; border-right: 1px solid #8a8a8a; display: flex; align-items: center; flex: none; box-sizing: content-box; }
  .logo { width: 145px; padding-left: 5px; box-sizing: border-box; display: flex; align-items: center; gap: 2px; color: #d8262c; }
  .sw { font: italic 12.500px "Liberation Sans", sans-serif; letter-spacing: -0.200px; }
  .menu { display: flex; font-size: 14px; width: 353px; }
  .menu span { width: 59.400px; flex: none; }
  .pin { display: block; margin-left: 3px; }
  .qa { display: flex; align-items: center; padding-left: 20px; flex: none; }
  .cell { display: flex; justify-content: center; align-items: center; flex: none; }
  .cursorbox { width: 60px; height: 44px; display: flex; border: 1px solid #8a8a8a; box-sizing: border-box; margin-left: 6px; flex: none; }
  .cursorface { width: 40px; background: #a6a8ac; display: flex; align-items: center; justify-content: center; }
  .cursorcaret { flex: 1; display: flex; align-items: center; justify-content: center; }
  .traffic { width: 42px; }
  .list { width: 50px; }
  .gear { width: 36px; }
  .gcaret { width: 22px; }
  .title { position: absolute; left: 1608px; width: 200px; text-align: center; font-size: 14px; }
  .search { position: absolute; left: 2035px; width: 251px; height: 28px; background: #fff; border: 1px solid #d0d0d0; box-sizing: border-box; display: flex; align-items: center; padding-left: 6px; }
  .stext { color: #666; margin-left: 8px; width: 174px; font-size: 14.500px; }
  .scaret { margin-left: 6px; }
  .winctl { position: absolute; left: 2291px; display: flex; }
  .wb { width: 53px; display: flex; justify-content: center; align-items: center; height: 30px; }
  .minbar { display: block; width: 15px; height: 3px; background: #333; margin-top: 16px; }
  .minbar.lite { background: #aaa; }

  .row2 { height: 44px; border-bottom: 1px solid #8a8a8a; border-right: 1px solid #8a8a8a; display: flex; align-items: center; padding-left: 3px; flex: none; box-sizing: content-box; }
  .tool { width: 38px; display: flex; justify-content: center; flex: none; }
  .sep { width: 1px; height: 38px; background: #bfc1c6; margin: 0 1px; flex: none; }

  .stage { flex: 1; display: flex; min-height: 0; }
  .center { width: 2212px; display: flex; flex-direction: column; flex: none; }
  .work { height: 1250px; display: flex; position: relative; flex: none; }

  .ctabs { position: absolute; left: 0; top: 0; height: 28px; display: flex; background: #a8aaae; border-right: 1px solid #8a8a8a; border-bottom: 1px solid #8a8a8a; font-size: 16px; color: #333; z-index: 3; }
  .ctabs span { line-height: 25px; border-right: 1px solid #8a8a8a; white-space: nowrap; text-align: center; box-sizing: border-box; }
  .ctabs span:nth-child(1) { width: 66px; }
  .ctabs span:nth-child(2) { width: 56px; }
  .ctabs span:nth-child(3) { width: 56px; }
  .ctabs span:nth-child(4) { width: 153px; letter-spacing: -0.500px; }
  .ctabs span:nth-child(5) { width: 84px; }
  .ctabs span.on { width: 62px; background: #d7dae0; color: #555; font-size: 14.500px; border-right: 0; }

  .left { width: 231px; flex: none; box-sizing: border-box; border-right: 2px solid #9a9a9a; border-left: 1px solid #a8a8a8; padding-top: 29px; display: flex; flex-direction: column; }
  .ltop { height: 23px; border-top: 1px solid #8a8a8a; border-bottom: 1px solid #8a8a8a; margin: 1px 0 0 0; display: flex; justify-content: center; align-items: center; box-sizing: border-box; }
  .dot { width: 4px; height: 4px; border: 1px solid #999; border-radius: 50%; }
  .ltabs { display: flex; height: 42px; position: relative; background: #a8aaae; }
  .ltab { width: 52px; border-right: 1px solid #8a8a8a; display: flex; align-items: center; justify-content: center; box-sizing: border-box; flex: none; overflow: hidden; }
  .ltab.on { background: #d7dae0; }
  .ltab.short { width: 20px; border: 0; }
  .lnav { position: absolute; right: 0; bottom: 0; width: 45px; height: 24px; display: flex; background: #eee; border: 1px solid #ccc; box-sizing: border-box; }
  .lnav b { flex: 1; text-align: center; font: 12px/22px "DejaVu Sans", sans-serif; color: #222; border-right: 1px solid #ccc; }
  .filter { margin: 0 3px 0 4px; height: 31px; background: #eff0f1; border: 1px solid #ccc; box-sizing: border-box; display: flex; align-items: center; padding-left: 7px; }
  .fcaret { margin: 12px 0 0 2px; transform: scale(.6); }
  .tree { list-style: none; margin: 0; padding: 0; overflow: hidden; font: 15px/1.2 "Noto Sans", "Noto Sans CJK SC", sans-serif; letter-spacing: .2px; }
  .tree li { height: 24px; display: flex; align-items: center; white-space: nowrap; overflow: hidden; }
  .tree li.root { padding-left: 4px; gap: 2px; }
  .tree li.gray { color: #999; }
  .tw { width: 26px; flex: none; text-align: center; font: 11px "DejaVu Sans", sans-serif; color: #777; padding-right: 3px; box-sizing: border-box; }
  .tic { width: 23px; flex: none; }
  .rollback { height: 4px; background: #3a8fc7; margin: 1px 2px 0 0; flex: none; }
  .lfill { flex: 1; }
  .hscroll { height: 20px; background: #eff0f1; display: flex; align-items: center; margin: 0 2px 0 0; position: relative; }
  .hscroll i { position: absolute; left: 21px; width: 93px; top: 1px; bottom: 0; background: #cbcbcb; }
  .hscroll em { font: 700 20px/18px "Liberation Sans", sans-serif; color: #666; width: 21px; text-align: center; font-style: normal; }
  .hscroll em:last-child { margin-left: auto; }
  .lend { height: 4px; border-bottom: 1px solid #8a8a8a; margin-right: 2px; }

  .view { position: relative; width: 1981px; flex: none; background: #fff; overflow: hidden; }
  .model { display: block; position: absolute; left: 0; top: 0; }
  .tr { font: 13px "Liberation Sans", sans-serif; text-anchor: middle; }
  .headup { position: absolute; left: 583px; top: 3px; height: 38px; display: flex; align-items: center; }
  .hu { width: 38px; height: 38px; display: flex; align-items: center; justify-content: center; flex: none; box-sizing: border-box; }
  .hu.on { background: #a6a8ac; border: 1px solid #555; }
  .hu.eye { width: 53px; background: #bcbcbc; border: 1px solid #aaa; display: flex; justify-content: flex-start; }
  .eyeface { width: 38px; display: flex; justify-content: center; }
  .eyecaret { flex: 1; height: 100%; background: #ddd; display: flex; align-items: center; justify-content: center; }
  .vpctl { position: absolute; left: 1786px; top: 8px; display: flex; }
  .vpctl span { width: 38px; height: 24px; display: flex; align-items: center; justify-content: center; }
  .cmdbar { position: absolute; left: 62px; top: 45px; display: flex; align-items: center; height: 30px; }
  .trail { width: 24px; }
  .cmds { display: flex; }
  .cmd { width: 30px; height: 30px; border: 1px solid #ddd; background: #f7f7f7; box-sizing: border-box; margin-right: 1px; display: flex; align-items: center; justify-content: center; }
  .more { color: #aaa; font: 15px "DejaVu Sans", sans-serif; margin-left: 5px; }
  .crumbs { position: absolute; left: 15px; top: 80px; width: 270px; height: 30px; background: #f7f7f7; border: 1px solid #ddd; box-sizing: border-box; display: flex; align-items: center; padding-left: 9px; font-size: 13px; color: #111; overflow: hidden; }
  .cr { width: 34.500px; display: flex; justify-content: center; flex: none; position: relative; }
  .cr::after { content: ""; position: absolute; right: -9px; top: -1px; width: 20px; height: 20px; border-top: 1px solid #d8d8d8; border-right: 1px solid #d8d8d8; transform: rotate(45deg) scale(.9); }
  .crt { width: 73px; margin-left: -2px; padding-left: 2px; box-sizing: border-box; white-space: nowrap; flex: none; }
  .crend { flex: 1; height: 100%; background: #c2d9ea; display: flex; align-items: center; justify-content: center; }
  .sk { position: absolute; left: 178px; top: 116px; display: flex; align-items: center; }
  .trail2 { width: 20px; }
  .skbox { width: 72px; height: 25px; background: #fff; border: 1px solid #ddd; box-sizing: border-box; display: flex; align-items: center; gap: 5px; padding-left: 5px; font-size: 13px; color: #111; }
  .tasktabs { position: absolute; right: 0; top: 68px; width: 46px; display: flex; flex-direction: column; }
  .tasktabs span { height: 45px; background: #a8aaae; border: 1px solid #8a8a8a; border-bottom: 0; box-sizing: border-box; display: flex; align-items: center; justify-content: center; }
  .tasktabs span.on { background: #d7dae0; border-bottom: 1px solid #8a8a8a; border-right: 0; }

  .btabs { height: 21px; border-top: 1px solid #8a8a8a; border-bottom: 1px solid #8a8a8a; display: flex; font-size: 16px; color: #333; flex: 1; }
  .bnav { width: 80px; margin-left: 2px; display: flex; gap: 1px; border-top: 1px solid #333; margin-top: -1px; }
  .bnav i { flex: 1; background: #9fa2b5; border: 1px solid #8d90a4; box-sizing: border-box; display: flex; align-items: center; justify-content: center; }
  .bt { line-height: 18px; box-sizing: border-box; border-right: 1px solid #8a8a8a; white-space: nowrap; padding-left: 9px; }
  .bt.on { width: 60px; margin-left: 1px; padding-left: 15px; }
  .bt.three { width: 77px; background: #a8aaae; }
  .bt.motion { width: 108px; background: #a8aaae; }

  .right { width: 348px; flex: none; position: relative; border-left: 3px solid #50546a; box-sizing: border-box; display: flex; flex-direction: column; margin-left: 0; font: 15px/1.2 "Noto Sans", "Noto Sans CJK SC", sans-serif; }
  .rhead { height: 23px; background: #a9abaf; border-bottom: 1px solid #111; display: flex; align-items: center; position: relative; justify-content: center; flex: none; font-size: 15px; margin-left: 1px; padding-bottom: 2px; box-sizing: border-box; }
  .rhead b { margin-left: -22px; }
  .rback { position: absolute; left: 13px; top: -3px; font: 700 20px "DejaVu Sans", sans-serif; color: #222; }
  .rgear { position: absolute; right: 24px; top: 2px; }
  .rpin { position: absolute; right: 3px; top: 1px; }
  .rbody { flex: 1; display: flex; flex-direction: column; padding-left: 4px; min-height: 0; }
  .actions { height: 37px; flex: none; background: linear-gradient(#7b7f93, #a9adba); display: flex; align-items: center; gap: 7px; padding-left: 21px; margin-bottom: 7px; }
  button { font: inherit; height: 26px; padding: 0; box-sizing: border-box; }
  .apply { width: 143px; background: #dcdcdc; border: 1px solid #8a8a8a; color: #222; }
  .reset { width: 144px; background: #f0f0f0; border: 1px solid #ccc; color: #888; }
  .sec { margin: 0 9px 0 11px; border-top: 1px solid #9ea5c0; flex: none; }
  .sech { height: 24px; display: flex; align-items: center; justify-content: space-between; padding: 0 6px 0 6px; font-size: 14px; }
  .lab { height: 24px; line-height: 24px; padding-left: 13px; }
  .cat { margin-top: 4px; padding-left: 12px; }
  .radio { height: 24px; display: flex; align-items: center; padding-left: 15px; gap: 7px; }
  .radio i { width: 13px; height: 13px; border: 1px solid #888; border-radius: 50%; background: #f4f4f4; position: relative; flex: none; }
  .radio i.sel::after { content: ""; position: absolute; inset: 3px; border-radius: 50%; background: #111; }
  .fields { margin-top: 14px; }
  .field { height: 64.400px; }
  .inp { margin: 4px 13px 0 14px; height: 26px; background: #fff; border: 1px solid #aaa; box-sizing: border-box; display: flex; align-items: center; padding-left: 5px; position: relative; font-size: 15px; }
  .inp > span:first-child { flex: 1; }
  .dd { position: absolute; right: 0; top: 0; bottom: 0; width: 21px; display: flex; align-items: center; justify-content: center; }
  .dd.shade { background: #eaeaea; }
  .spinbox { border-color: #7b8096; height: 28px; }
  .spin { position: absolute; right: 0; top: 0; bottom: 0; width: 21px; border-left: 1px solid #7b8096; display: flex; flex-direction: column; background: #e4e4e4; font: 11px/13px "DejaVu Sans", sans-serif; text-align: center; }
  .spin i { flex: 1; border-bottom: 1px solid #7b8096; }
  .spin i:last-child { border: 0; }
  .kv { display: flex; justify-content: space-between; height: 32px; line-height: 32px; padding: 0 13px 0 13px; }
  .kv.first { margin-top: -4px; }
  .kv:last-child { margin-bottom: 12px; }
  .inp.small { height: 20px; margin-top: 5px; }
  .inp.small.b { height: 21px; }
  .info .l1 { margin-top: 2px; height: 28px; line-height: 28px; white-space: nowrap; }
  .l2 { margin-top: 10px; }
  .loc { display: flex; justify-content: space-between; margin: 13px 13px 0 13px; align-items: center; }
  .path { width: 136px; line-height: 19px; font-size: 14.500px; white-space: nowrap; }
  .rfill { flex: 1; }
  .rfoot { height: 50px; flex: none; background: linear-gradient(#777a8a, #a8aab8); display: flex; align-items: center; padding-left: 106px; gap: 10px; }
  .morebtn { width: 96px; height: 25px; background: #e8e8e8; border: 1px solid #ccc; }
  .mp { display: block; background: #e8e8e8; padding: 1px; }
  .wm { position: absolute; left: 64px; top: 1199px; display: flex; gap: 8px; opacity: .8; pointer-events: none; width: 270px; }
  .wmt { display: flex; flex-direction: column; color: #fff; padding-top: 9px; }
  .wmt b { font-size: 42px; line-height: 42px; color: #eef0f4; opacity: .8; white-space: nowrap; }
  .wmt small { font: 700 15px/14px "Liberation Sans", sans-serif; letter-spacing: 1.300px; opacity: .85; margin-top: 2px; white-space: nowrap; }

  .status { height: 22px; flex: none; position: relative; font-size: 14.300px; line-height: 22px; color: #222; }
  .status span { position: absolute; top: 0; white-space: nowrap; }
  .smsg { left: 2px; }
  .s1 { left: 2163px; }
  .s2 { left: 2224px; }
  .s3 { left: 2442px; }
  .s4 { left: 2507px; font: 10px/22px "DejaVu Sans", sans-serif; }
  .s5 { left: 2540px; top: 1px !important; }
</style>
